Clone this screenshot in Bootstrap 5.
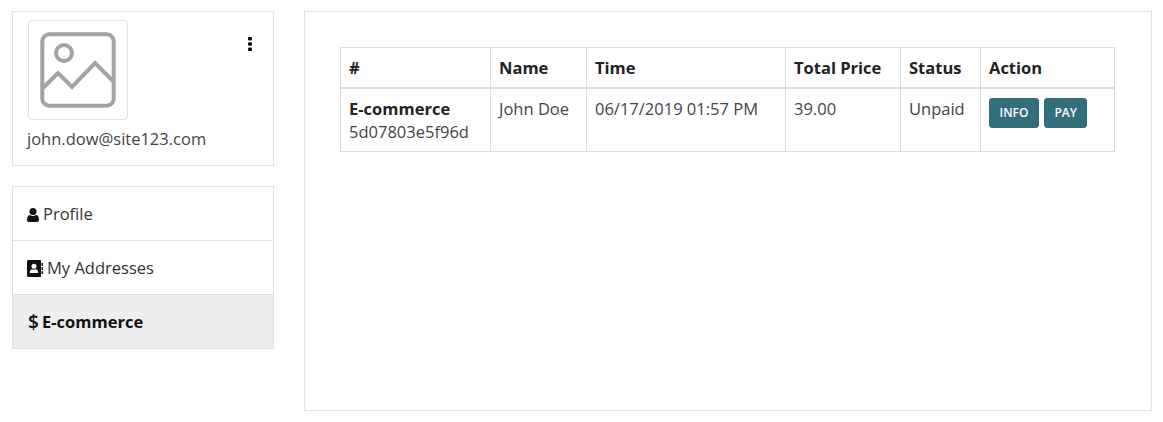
<!doctype html>
<html lang="en"><head><meta charset="utf-8"><title>Orders</title>
<link href="https://cdn.jsdelivr.net/npm/bootstrap@5.3.0/dist/css/bootstrap.min.css" rel="stylesheet">
<style>
html,body{height:100%;}
body{font-family:"Open Sans",sans-serif;font-size:16.5px;color:#444;background:#fff;overflow:hidden;}
.shell{padding:11px 11px 0 12px;gap:30px;}
.side{width:262px;flex:none;}
.main-panel{flex:1;height:400px;border:1px solid #e1e1e1;padding:35px;}
.user-box{border:1px solid #e1e1e1;height:155px;padding:8px 15px 0 15px;margin-bottom:20px;}
.thumb{width:100px;height:100px;border:1px solid #e1e1e1;border-radius:4px;display:flex;align-items:center;justify-content:center;}
.mail{margin:8px 0 0 -1px;line-height:22px;white-space:nowrap;}
.dots{margin-top:17px;margin-right:6px;}
.side-list{border:1px solid #e1e1e1;border-bottom:0;}
.side-item{display:flex;align-items:center;height:54px;padding:2px 14px 0;border-bottom:1px solid #e1e1e1;color:#333;text-decoration:none;white-space:nowrap;}
.side-item svg{margin-right:4px;flex:none;}
.side-item.on{background:#eee;color:#111;font-weight:700;padding-left:15px;}
.sign{font-size:19px;font-weight:600;line-height:1;width:14px;flex:none;}
.orders{table-layout:fixed;width:774px;margin:0;color:#444;border-color:#ddd;}
.orders th{font-weight:700;color:#222;padding:8px 8px 7px;line-height:24px;border:1px solid #ddd;border-bottom-width:2px;vertical-align:middle;}
.orders td{padding:8px;line-height:23px;border:1px solid #ddd;vertical-align:top;height:63px;}
.orders td b{color:#222;}
.btn-pair{gap:5px;margin-top:1px;}
.act{background:#336e7b;border:1px solid #336e7b;color:#fff;font-size:12px;font-weight:600;line-height:18px;padding:5px 9.500px;border-radius:3px;text-transform:uppercase;}
.act:hover{background:#2b5e69;color:#fff;}
.w1{width:150px}.w2{width:96px}.w3{width:199px}.w4{width:115px}.w5{width:80px}.w6{width:134px}
</style></head>
<body>
<div class="d-flex align-items-start shell">
  <aside class="side">
    <div class="user-box">
      <div class="d-flex justify-content-between align-items-start">
        <div class="thumb">
          <svg width="78" height="78" viewBox="0 0 78 78" fill="none" stroke="#a3a3a3" stroke-width="4"><rect x="3.300" y="3.300" width="71.400" height="71.400" rx="7"/><circle cx="25" cy="22" r="8"/><path d="M4 57 L19 42 L33 56 L56 32 L74 50"/></svg>
        </div>
        <svg class="dots" width="4" height="14" viewBox="0 0 4 14" fill="#111"><rect x="0" y="0" width="4" height="3.400" rx="1"/><rect x="0" y="5.300" width="4" height="3.400" rx="1"/><rect x="0" y="10.600" width="4" height="3.400" rx="1"/></svg>
      </div>
      <div class="mail">john.dow@site123.com</div>
    </div>
    <nav class="side-list">
      <a class="side-item" href="#"><svg width="12" height="14" viewBox="0 0 12 14" fill="#111"><circle cx="6" cy="3.500" r="3.500"/><path d="M0 12c0-3.500 1.500-5 3-5 .8.600 1.800 1 3 1s2.200-.4 3-1c1.500 0 3 1.500 3 5 0 1.300-.8 2-2 2H2c-1.200 0-2-.7-2-2z"/></svg>Profile</a>
      <a class="side-item" href="#"><svg width="16" height="17" viewBox="0 0 16 17"><path fill="#111" d="M1.500 0h11.500c.6 0 1 .4 1 1v15c0 .6-.4 1-1 1H1.500C.7 17 0 16.300 0 15.500v-14C0 .7.700 0 1.500 0zM14.500 3H16v2.700h-1.500zM14.500 7.200H16v2.700h-1.500zM14.500 11.300H16V14h-1.500z"/><circle cx="7" cy="6.300" r="2.500" fill="#fff"/><path fill="#fff" d="M2.800 13c0-2.600 1.200-3.700 2.300-3.700.5.300 1.200.5 1.900.5s1.400-.2 1.900-.5c1.100 0 2.300 1.100 2.300 3.700z"/></svg>My Addresses</a>
      <a class="side-item on" href="#"><span class="sign">$</span>E-commerce</a>
    </nav>
  </aside>
  <main class="main-panel">
    <table class="table orders">
      <colgroup><col class="w1"><col class="w2"><col class="w3"><col class="w4"><col class="w5"><col class="w6"></colgroup>
      <thead><tr><th>#</th><th>Name</th><th>Time</th><th>Total Price</th><th>Status</th><th>Action</th></tr></thead>
      <tbody><tr>
        <td><b>E-commerce</b><br>5d07803e5f96d</td><td>John Doe</td><td>06/17/2019 01:57 PM</td><td>39.00</td><td>Unpaid</td>
        <td><div class="d-flex btn-pair"><a class="btn act" href="#">Info</a><a class="btn act" href="#">Pay</a></div></td>
      </tr></tbody>
    </table>
  </main>
</div>
<script src="https://cdn.jsdelivr.net/npm/bootstrap@5.3.0/dist/js/bootstrap.bundle.min.js"></script>
</body></html>
